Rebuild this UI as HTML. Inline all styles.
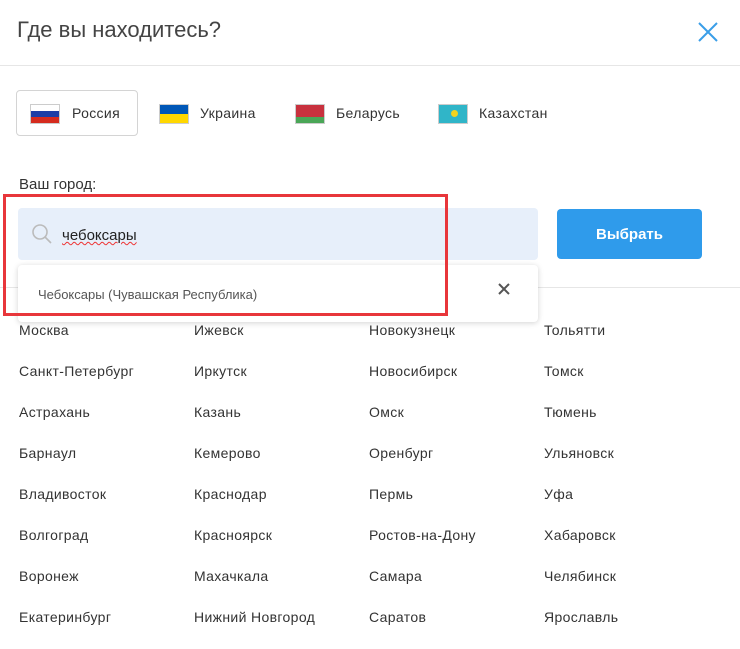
<!DOCTYPE html>
<html><head><meta charset="utf-8"><style>
body{margin:0;width:740px;height:649px;background:#fff;font-family:"Liberation Sans",sans-serif;position:relative;overflow:hidden;color:#222}
.a{position:absolute}
.hl{position:absolute;left:0;width:740px;height:1px;background:#e6e6e6}
.flag{position:absolute;width:30px;height:20px;border:1px solid #ccc;box-sizing:border-box}
.ct{position:absolute;font-size:14px;letter-spacing:0.35px;color:#333;white-space:nowrap}
</style></head><body>
<div class="a" style="left:17px;top:17px;font-size:22px;color:#444">Где вы находитесь?</div>
<svg class="a" style="left:697px;top:21px" width="22" height="22"><path d="M2 2L20 20M20 2L2 20" stroke="#3a9ee8" stroke-width="2"/></svg>
<div class="hl" style="top:65px"></div>
<div class="a" style="left:16px;top:90px;width:122px;height:46px;border:1px solid #d4d4d4;border-radius:4px;box-sizing:border-box"></div>
<div class="flag" style="left:30px;top:104px;background:linear-gradient(#fff 33%,#1c3ea6 33%,#1c3ea6 66%,#d52b1e 66%)"></div>
<div class="ct" style="left:72px;top:105px">Россия</div>
<div class="flag" style="left:159px;top:104px;background:linear-gradient(#0057b7 50%,#ffd700 50%)"></div>
<div class="ct" style="left:200px;top:105px">Украина</div>
<div class="flag" style="left:295px;top:104px;background:linear-gradient(#c8313e 66%,#4aa657 66%)"></div>
<div class="ct" style="left:336px;top:105px">Беларусь</div>
<div class="flag" style="left:438px;top:104px;background:#30b5c8"><div style="position:absolute;left:12px;top:5px;width:7px;height:7px;border-radius:50%;background:#f3d31d"></div></div>
<div class="ct" style="left:479px;top:105px">Казахстан</div>
<div class="a" style="left:19px;top:176px;font-size:15px;color:#333">Ваш город:</div>
<div class="a" style="left:18px;top:208px;width:520px;height:52px;background:#e7effa;border-radius:4px"></div>
<svg class="a" style="left:30px;top:222px" width="24" height="24"><circle cx="10" cy="10" r="7" stroke="#bbb" stroke-width="1.6" fill="none"/><path d="M15 15L21 21" stroke="#bbb" stroke-width="1.6"/></svg>
<div class="a" style="left:62px;top:227px;font-size:15px;color:#222;text-decoration:underline wavy #e33;text-decoration-thickness:1px">чебоксары</div>
<div class="a" style="left:557px;top:209px;width:145px;height:50px;background:#2f9beb;border-radius:4px;color:#fff;font-size:15px;font-weight:bold;text-align:center;line-height:52px">Выбрать</div>
<div class="hl" style="top:287px"></div>
<div class="a" style="left:18px;top:265px;width:520px;height:57px;background:#fff;border-radius:4px;box-shadow:0 1px 6px rgba(0,0,0,.18)"></div>
<div class="a" style="left:38px;top:287px;font-size:13px;color:#555">Чебоксары (Чувашская Республика)</div>
<svg class="a" style="left:498px;top:283px" width="12" height="12"><path d="M1 1L11 11M11 1L1 11" stroke="#555" stroke-width="2"/></svg>
<div class="a" style="left:3px;top:194px;width:445px;height:122px;border:3px solid #e8363b;box-sizing:border-box"></div>
<div class="ct" style="left:19px;top:322px">Москва</div><div class="ct" style="left:194px;top:322px">Ижевск</div><div class="ct" style="left:369px;top:322px">Новокузнецк</div><div class="ct" style="left:544px;top:322px">Тольятти</div>
<div class="ct" style="left:19px;top:363px">Санкт-Петербург</div><div class="ct" style="left:194px;top:363px">Иркутск</div><div class="ct" style="left:369px;top:363px">Новосибирск</div><div class="ct" style="left:544px;top:363px">Томск</div>
<div class="ct" style="left:19px;top:404px">Астрахань</div><div class="ct" style="left:194px;top:404px">Казань</div><div class="ct" style="left:369px;top:404px">Омск</div><div class="ct" style="left:544px;top:404px">Тюмень</div>
<div class="ct" style="left:19px;top:445px">Барнаул</div><div class="ct" style="left:194px;top:445px">Кемерово</div><div class="ct" style="left:369px;top:445px">Оренбург</div><div class="ct" style="left:544px;top:445px">Ульяновск</div>
<div class="ct" style="left:19px;top:486px">Владивосток</div><div class="ct" style="left:194px;top:486px">Краснодар</div><div class="ct" style="left:369px;top:486px">Пермь</div><div class="ct" style="left:544px;top:486px">Уфа</div>
<div class="ct" style="left:19px;top:527px">Волгоград</div><div class="ct" style="left:194px;top:527px">Красноярск</div><div class="ct" style="left:369px;top:527px">Ростов-на-Дону</div><div class="ct" style="left:544px;top:527px">Хабаровск</div>
<div class="ct" style="left:19px;top:568px">Воронеж</div><div class="ct" style="left:194px;top:568px">Махачкала</div><div class="ct" style="left:369px;top:568px">Самара</div><div class="ct" style="left:544px;top:568px">Челябинск</div>
<div class="ct" style="left:19px;top:609px">Екатеринбург</div><div class="ct" style="left:194px;top:609px">Нижний Новгород</div><div class="ct" style="left:369px;top:609px">Саратов</div><div class="ct" style="left:544px;top:609px">Ярославль</div>
</body></html>
